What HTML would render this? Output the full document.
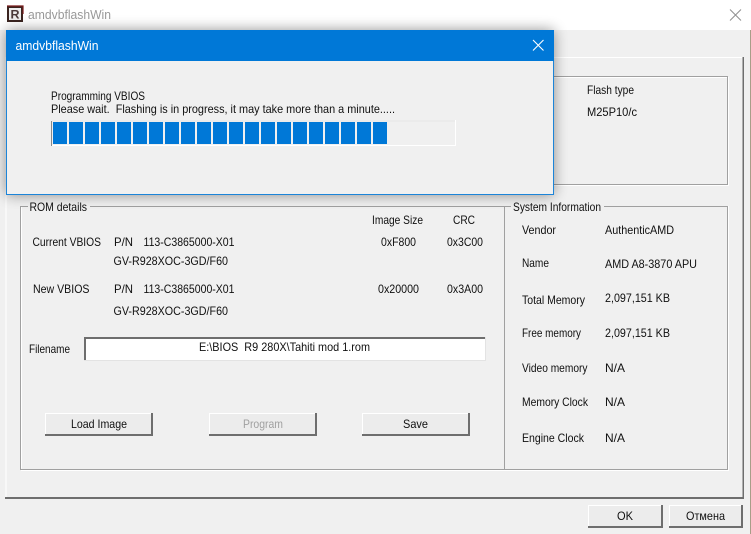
<!DOCTYPE html>
<html><head><meta charset="utf-8"><title>amdvbflashWin</title>
<style>
html,body{margin:0;padding:0;background:#f0f0f0;overflow:hidden}
svg{display:block}
text{font-family:"Liberation Sans",sans-serif;font-size:12px;fill:#101010}
.b{fill:#ececec;stroke:none}
.w{fill:none;stroke:#fff;stroke-width:1}
.d{fill:none;stroke:#6e6e6e;stroke-width:2}
</style></head><body>
<svg width="751" height="534" viewBox="0 0 751 534" xmlns="http://www.w3.org/2000/svg">
<defs><filter id="s" x="-10%" y="-20%" width="120%" height="140%"><feGaussianBlur stdDeviation="7"/></filter></defs>
<rect width="751" height="534" fill="#f0f0f0"/>
<rect width="751" height="30" fill="#fff"/>
<rect x="750" y="30" width="1" height="504" fill="#a89e88"/>
<!-- app icon -->
<rect x="7" y="6" width="16" height="16" fill="#3a2420"/>
<path d="M7 6 H23 V14" fill="none" stroke="#7a1c1c" stroke-width="1.2"/>
<rect x="9" y="8" width="12" height="12" fill="#eeeeee"/>
<text x="10.5" y="18.5" style="font-size:11.5px;font-weight:bold;fill:#4a3a3a" textLength="9" lengthAdjust="spacingAndGlyphs">R</text>
<text x="28" y="19" style="font-size:13px;fill:#999" textLength="83" lengthAdjust="spacingAndGlyphs">amdvbflashWin</text>
<path d="M730 9.5 L741 20.5 M741 9.5 L730 20.5" stroke="#8f8f8f" stroke-width="1" fill="none"/>
<!-- tab panel -->
<path d="M6 498 V57.5 H743" fill="none" stroke="#fff"/>
<rect x="5" y="497" width="739" height="2" fill="#6e6e6e"/>
<rect x="742.5" y="57" width="1.5" height="442" fill="#6e6e6e"/>
<!-- top group -->
<path d="M20.5 76.5 H727.5 V184.5 H20.5 Z" fill="none" stroke="#a0a0a0"/>
<path d="M728.5 77 V185.5 H20 M21.5 77.5 H727" fill="none" stroke="#fff"/>
<text x="587" y="94" textLength="47" lengthAdjust="spacingAndGlyphs">Flash type</text>
<text x="587" y="116" textLength="50" lengthAdjust="spacingAndGlyphs">M25P10/c</text>
<!-- ROM details -->
<path d="M28 206.5 H20.5 V469.5 H504.5 V206.5 H90" fill="none" stroke="#a0a0a0"/>
<path d="M21.5 207 V468.5 M21 470.5 H505" fill="none" stroke="#fff"/>
<text x="29.5" y="211" textLength="57.5" lengthAdjust="spacingAndGlyphs">ROM details</text>
<text x="372" y="224" textLength="51" lengthAdjust="spacingAndGlyphs">Image Size</text>
<text x="453" y="224" textLength="22" lengthAdjust="spacingAndGlyphs">CRC</text>
<text x="32.5" y="246" textLength="68.5" lengthAdjust="spacingAndGlyphs">Current VBIOS</text>
<text x="114" y="246" textLength="19" lengthAdjust="spacingAndGlyphs">P/N</text>
<text x="143.5" y="246" textLength="91" lengthAdjust="spacingAndGlyphs">113-C3865000-X01</text>
<text x="381" y="246" textLength="35" lengthAdjust="spacingAndGlyphs">0xF800</text>
<text x="447" y="246" textLength="36" lengthAdjust="spacingAndGlyphs">0x3C00</text>
<text x="113.5" y="265" textLength="114.5" lengthAdjust="spacingAndGlyphs">GV-R928XOC-3GD/F60</text>
<text x="33" y="293" textLength="56.5" lengthAdjust="spacingAndGlyphs">New VBIOS</text>
<text x="114" y="293" textLength="19" lengthAdjust="spacingAndGlyphs">P/N</text>
<text x="143.5" y="293" textLength="91" lengthAdjust="spacingAndGlyphs">113-C3865000-X01</text>
<text x="378" y="293" textLength="41" lengthAdjust="spacingAndGlyphs">0x20000</text>
<text x="447" y="293" textLength="36" lengthAdjust="spacingAndGlyphs">0x3A00</text>
<text x="113.5" y="315" textLength="114.5" lengthAdjust="spacingAndGlyphs">GV-R928XOC-3GD/F60</text>
<text x="29" y="353" textLength="41" lengthAdjust="spacingAndGlyphs">Filename</text>
<!-- filename field -->
<rect x="84" y="337" width="401" height="23" fill="#fff"/>
<path d="M85 360 V338 H485" fill="none" stroke="#6e6e6e" stroke-width="2"/>
<path d="M84 360.5 H485.5 V337" fill="none" stroke="#e3e3e3"/>
<text x="199" y="351" textLength="171" lengthAdjust="spacingAndGlyphs" xml:space="preserve">E:\BIOS  R9 280X\Tahiti mod 1.rom</text>
<!-- Buttons -->
<rect class="b" x="45" y="413" width="108" height="23"/>
<path class="w" d="M45.5 435 V413.5 H152"/><path class="d" d="M152 413 V435 H45"/>
<rect class="b" x="209" y="413" width="108" height="23"/>
<path class="w" d="M209.5 435 V413.5 H316"/><path class="d" d="M316 413 V435 H209"/>
<rect class="b" x="362" y="413" width="108" height="23"/>
<path class="w" d="M362.5 435 V413.5 H469"/><path class="d" d="M469 413 V435 H362"/>
<rect class="b" x="588" y="505" width="75" height="23"/>
<path class="w" d="M588.5 527 V505.5 H662"/><path class="d" d="M662 505 V527 H588"/>
<rect class="b" x="669" y="505" width="74" height="23"/>
<path class="w" d="M669.5 527 V505.5 H742"/><path class="d" d="M742 505 V527 H669"/>
<text x="71" y="428" textLength="56" lengthAdjust="spacingAndGlyphs">Load Image</text>
<text x="243" y="428" textLength="40" lengthAdjust="spacingAndGlyphs" style="fill:#a0a0a0">Program</text>
<text x="403" y="428" textLength="25" lengthAdjust="spacingAndGlyphs">Save</text>
<text x="617" y="520" textLength="16" lengthAdjust="spacingAndGlyphs">OK</text>
<text x="686" y="520" textLength="39" lengthAdjust="spacingAndGlyphs">Отмена</text>
<!-- System info -->
<path d="M505 206.5 H511 M604 206.5 H727.5 V469.5 H505" fill="none" stroke="#a0a0a0"/>
<path d="M728.5 206 V470.5 H505" fill="none" stroke="#fff"/>
<text x="513" y="211" textLength="88" lengthAdjust="spacingAndGlyphs">System Information</text>
<text x="522" y="234" textLength="34" lengthAdjust="spacingAndGlyphs">Vendor</text>
<text x="605" y="234" textLength="69" lengthAdjust="spacingAndGlyphs">AuthenticAMD</text>
<text x="522" y="267" textLength="27" lengthAdjust="spacingAndGlyphs">Name</text>
<text x="605" y="268" textLength="92" lengthAdjust="spacingAndGlyphs">AMD A8-3870 APU</text>
<text x="522" y="304" textLength="63" lengthAdjust="spacingAndGlyphs">Total Memory</text>
<text x="605" y="302" textLength="65" lengthAdjust="spacingAndGlyphs">2,097,151 KB</text>
<text x="522" y="337" textLength="59" lengthAdjust="spacingAndGlyphs">Free memory</text>
<text x="605" y="337" textLength="65" lengthAdjust="spacingAndGlyphs">2,097,151 KB</text>
<text x="522" y="372" textLength="65.5" lengthAdjust="spacingAndGlyphs">Video memory</text>
<text x="605" y="372" textLength="20" lengthAdjust="spacingAndGlyphs">N/A</text>
<text x="522" y="406" textLength="66" lengthAdjust="spacingAndGlyphs">Memory Clock</text>
<text x="605" y="406" textLength="20" lengthAdjust="spacingAndGlyphs">N/A</text>
<text x="522" y="442" textLength="62" lengthAdjust="spacingAndGlyphs">Engine Clock</text>
<text x="605" y="442" textLength="20" lengthAdjust="spacingAndGlyphs">N/A</text>
<!-- dialog -->
<rect x="6" y="30" width="548" height="165" fill="#000" opacity=".42" filter="url(#s)"/>
<rect x="6.5" y="30.5" width="547" height="164" fill="#f0f0f0" stroke="#1c84d8"/>
<rect x="6" y="30" width="548" height="31" fill="#0078d7"/>
<text x="15.5" y="50" style="font-size:13px;fill:#fff" textLength="83" lengthAdjust="spacingAndGlyphs">amdvbflashWin</text>
<path d="M533 40 L543.5 50.5 M543.5 40 L533 50.5" stroke="#fff" stroke-width="1.1" fill="none"/>
<text x="51" y="100" textLength="94" lengthAdjust="spacingAndGlyphs">Programming VBIOS</text>
<text x="51" y="113" textLength="344" lengthAdjust="spacingAndGlyphs" xml:space="preserve">Please wait.  Flashing is in progress, it may take more than a minute.....</text>
<path d="M51.5 146 V121" stroke="#8a8a8a" fill="none"/>
<path d="M52 145.5 H455.5 V120" stroke="#fff" fill="none"/>
<path d="M52 121 H455" stroke="#e6e6e6" fill="none"/>
<g fill="#0078d7">
<rect x="53" y="122" width="14" height="22"/><rect x="69" y="122" width="14" height="22"/><rect x="85" y="122" width="14" height="22"/><rect x="101" y="122" width="14" height="22"/><rect x="117" y="122" width="14" height="22"/><rect x="133" y="122" width="14" height="22"/><rect x="149" y="122" width="14" height="22"/>
<rect x="165" y="122" width="14" height="22"/><rect x="181" y="122" width="14" height="22"/><rect x="197" y="122" width="14" height="22"/><rect x="213" y="122" width="14" height="22"/><rect x="229" y="122" width="14" height="22"/><rect x="245" y="122" width="14" height="22"/><rect x="261" y="122" width="14" height="22"/>
<rect x="277" y="122" width="14" height="22"/><rect x="293" y="122" width="14" height="22"/><rect x="309" y="122" width="14" height="22"/><rect x="325" y="122" width="14" height="22"/><rect x="341" y="122" width="14" height="22"/><rect x="357" y="122" width="14" height="22"/><rect x="373" y="122" width="14" height="22"/>
</g>
</svg>
</body></html>
